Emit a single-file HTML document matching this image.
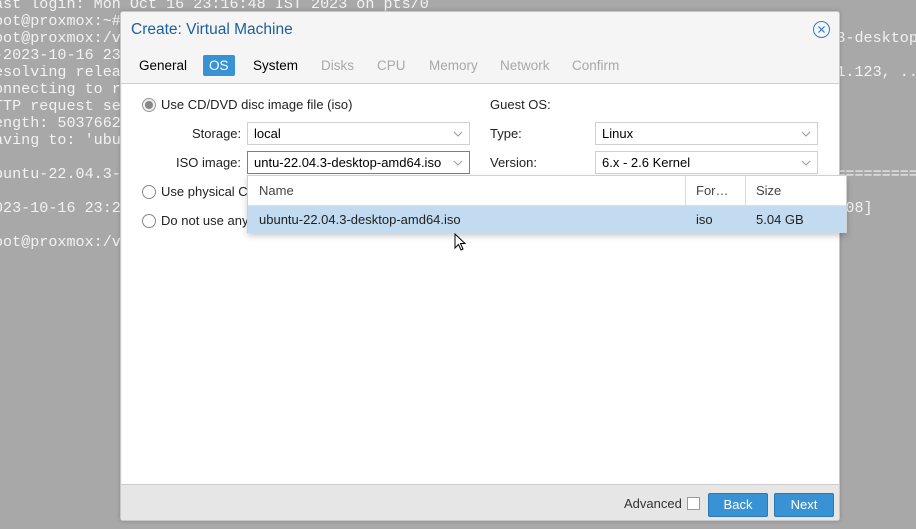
<!DOCTYPE html>
<html><head><style>
*{box-sizing:border-box;margin:0;padding:0}
body{width:916px;height:529px;background:#a8a8a8;position:relative;overflow:hidden;font-family:"Liberation Sans",Arial,sans-serif;font-size:13px;color:#000}
.term{position:absolute;left:0;top:-4px;width:916px;height:260px;overflow:hidden;font-family:"Liberation Mono",monospace;font-size:15.1px;line-height:17px;color:#f2f2f2;white-space:pre}
.term div{margin-left:-6px;height:17px}
.dlg{position:absolute;left:120px;top:11px;width:720px;height:510px;background:#f5f5f5;border:1px solid #c8c8c8;border-radius:3px;box-shadow:0 0 4px rgba(0,0,0,.2)}
.title{position:absolute;left:10px;top:9px;font-size:15.5px;color:#1c5f9e}
.close{position:absolute;left:692px;top:9px;width:17px;height:17px;border:1.2px solid #2b7ccc;border-radius:50%}
.tabs{position:absolute;left:0;top:41px;width:100%;height:31px;border-bottom:1px solid #cfcfcf}
.tab{position:absolute;top:2px;height:21px;line-height:21px;font-size:13.5px}
.dis{color:#a8a8a8}
.sel{background:#3892d4;color:#fff;border-radius:2px;padding:0 6px}
.body{position:absolute;left:1px;top:72px;width:717px;height:400px;background:#fff}
.foot{position:absolute;left:0;top:472px;width:100%;height:36px;background:#e6e6e6;border-top:1px solid #ccc}
.lbl{position:absolute;font-size:13px;color:#222}
.field{position:absolute;height:23px;border:1px solid #cfcfcf;background:#fff;padding-left:6px;line-height:21px;font-size:13px}
.field svg{position:absolute;right:6px;top:8px}
.radio{position:absolute;width:14px;height:14px;border:1px solid #888;border-radius:50%;background:#fff}
.btn{position:absolute;top:8px;height:24px;background:#3892d4;border:1px solid #2a78b5;border-radius:2px;color:#fff;text-align:center;line-height:22px;font-size:13px}
.pop{position:absolute;left:247px;top:175px;width:600px;height:58px;background:#fff;border:1px solid #d0d0d0;box-shadow:0 3px 6px rgba(0,0,0,.2)}
</style></head><body>
<div class="term"><div>ast login: Mon Oct 16 23:16:48 IST 2023 on pts/0</div><div>oot@proxmox:~# cd /var/lib/vz/template/iso</div><div>oot@proxmox:/var/lib/vz/template/iso# wget  https://releases.ubuntu.com/22.04.3/ubuntu-22.04.3-desktop-amd64.iso</div><div>-2023-10-16 23:17:02--  https://releases.ubuntu.com</div><div>esolving releases.ubuntu.com (releases.ubuntu.com)... 185.125.190.40, 91.189.91.124, 91.189.91.123, ..</div><div>onnecting to releases.ubuntu.com</div><div>TTP request sent, awaiting response... 200 OK</div><div>ength: 5037662208 (4.7G)</div><div>aving to: 'ubuntu-22.04.3-desktop-amd64.iso'</div><div> </div><div>buntu-22.04.3-desktop-amd64.iso 100%[===================================================================</div><div> </div><div>023-10-16 23:21:10 (19.5 MB/s) - 'ubuntu-22.04.3-desktop-amd64.iso' saved [5037662208/5037662208]</div><div> </div><div>oot@proxmox:/var/lib/vz/template/iso#</div></div>
<div class="dlg">
 <div class="title">Create: Virtual Machine</div>
 <div class="close"><svg width="15" height="15" viewBox="0 0 15 15" style="position:absolute;left:0;top:0"><path d="M4.5 4.5L10.5 10.5M10.5 4.5L4.5 10.5" stroke="#2b7ccc" stroke-width="1.2"/></svg></div>
 <div class="tabs">
  <div class="tab" style="left:18px">General</div>
  <div class="tab sel" style="left:82px">OS</div>
  <div class="tab" style="left:132px">System</div>
  <div class="tab dis" style="left:200px">Disks</div>
  <div class="tab dis" style="left:256px">CPU</div>
  <div class="tab dis" style="left:308px">Memory</div>
  <div class="tab dis" style="left:379px">Network</div>
  <div class="tab dis" style="left:451px">Confirm</div>
 </div>
 <div class="body"></div>
 <div class="foot">
  <div class="lbl" style="left:503px;top:11px;color:#333">Advanced</div>
  <div style="position:absolute;left:566px;top:12px;width:13px;height:13px;border:1px solid #999;background:#fff"></div>
  <div class="btn" style="left:587px;width:60px">Back</div>
  <div class="btn" style="left:653px;width:60px">Next</div>
 </div>
</div>
<div class="radio" style="left:142px;top:98px;border-color:#999;background:#eee"><div style="position:absolute;left:2px;top:2px;width:8px;height:8px;border-radius:50%;background:#888"></div></div>
<div class="lbl" style="left:161px;top:97px">Use CD/DVD disc image file (iso)</div>
<div class="lbl" style="left:192px;top:126px">Storage:</div>
<div class="field" style="left:247px;top:122px;width:223px">local<svg width="10" height="6"><path d="M1 1L5 5L9 1" fill="none" stroke="#999"/></svg></div>
<div class="lbl" style="left:176px;top:155px">ISO image:</div>
<div class="field" style="left:247px;top:151px;width:223px;border-color:#3892d4">untu-22.04.3-desktop-amd64.iso<svg width="10" height="6"><path d="M1 1L5 5L9 1" fill="none" stroke="#999"/></svg></div>
<div class="radio" style="left:142px;top:185px"></div>
<div class="lbl" style="left:161px;top:184px">Use physical C</div>
<div class="radio" style="left:142px;top:214px"></div>
<div class="lbl" style="left:161px;top:213px">Do not use any</div>
<div class="lbl" style="left:490px;top:97px">Guest OS:</div>
<div class="lbl" style="left:490px;top:126px">Type:</div>
<div class="field" style="left:595px;top:122px;width:223px">Linux<svg width="10" height="6"><path d="M1 1L5 5L9 1" fill="none" stroke="#999"/></svg></div>
<div class="lbl" style="left:490px;top:155px">Version:</div>
<div class="field" style="left:595px;top:151px;width:223px">6.x - 2.6 Kernel<svg width="10" height="6"><path d="M1 1L5 5L9 1" fill="none" stroke="#999"/></svg></div>
<div class="pop">
 <div style="position:absolute;left:0;top:0;width:100%;height:30px;border-bottom:1px solid #e0e0e0"></div>
 <div style="position:absolute;left:437px;top:0;width:1px;height:30px;background:#ddd"></div>
 <div style="position:absolute;left:497px;top:0;width:1px;height:30px;background:#ddd"></div>
 <div class="lbl" style="left:11px;top:7px;color:#444">Name</div>
 <div class="lbl" style="left:448px;top:7px;color:#444">For…</div>
 <div class="lbl" style="left:508px;top:7px;color:#444">Size</div>
 <div style="position:absolute;left:0;top:30px;width:100%;height:27px;background:#c2dbf0"></div>
 <div class="lbl" style="left:11px;top:36px">ubuntu-22.04.3-desktop-amd64.iso</div>
 <div class="lbl" style="left:448px;top:36px">iso</div>
 <div class="lbl" style="left:508px;top:36px">5.04 GB</div>
</div>
<svg style="position:absolute;left:454px;top:233px" width="14" height="20" viewBox="0 0 14 20"><path d="M1 1 L1 15 L4.5 11.5 L7 17 L9 16 L6.5 10.5 L11 10.5 Z" fill="#fff" stroke="#000" stroke-width="1"/></svg>
</body></html>
